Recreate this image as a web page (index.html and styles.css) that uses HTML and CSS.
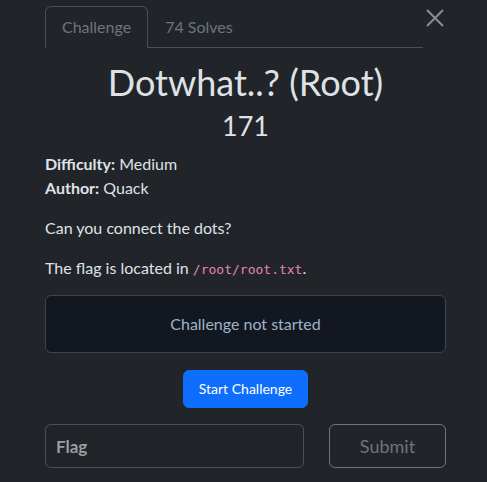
FILE: index.html
```html
<!DOCTYPE html>
<html>
<head>
<meta charset="utf-8">
<link rel="stylesheet" href="styles.css">
</head>
<body>
<div class="modal">
  <div class="header">
    <nav class="tabs">
      <span class="tab active">Challenge</span>
      <span class="tab">74 Solves</span>
    </nav>
    <button class="close" aria-label="Close">
      <svg width="18" height="18" viewBox="0 0 18 18"><path d="M1 1L17 17M17 1L1 17" stroke="#8a8e92" stroke-width="2" fill="none"/></svg>
    </button>
  </div>
  <h2 class="title">Dotwhat..? (Root)</h2>
  <h3 class="points">171</h3>
  <div class="meta">
    <div><b>Difficulty:</b> Medium</div>
    <div><b>Author:</b> Quack</div>
  </div>
  <p class="desc">Can you connect the dots?</p>
  <p class="desc">The flag is located in <code>/root/root.txt</code>.</p>
  <div class="status">Challenge not started</div>
  <div class="actions"><button class="start">Start Challenge</button></div>
  <div class="submit-row">
    <input class="flag" type="text" placeholder="Flag">
    <button class="submit">Submit</button>
  </div>
</div>
</body>
</html>
```
FILE: styles.css
```css
html, body {
  margin: 0;
  background: #212529;
  color: #dee2e6;
  font-family: Lato, "Open Sans", sans-serif;
  font-size: 16px;
  line-height: 24px;
}
.modal {
  width: 401px;
  padding: 6px 0 0 45px;
}
.header {
  display: flex;
  align-items: flex-start;
}
.tabs {
  display: flex;
  width: 378px;
  border-bottom: 1px solid #495057;
}
.tab {
  padding: 8px 16px;
  color: #6c757d;
  border: 1px solid transparent;
  border-radius: 6px 6px 0 0;
  margin-bottom: -1px;
}
.tab.active {
  border-color: #495057 #495057 #212529;
}
.close {
  background: none;
  border: 0;
  padding: 0;
  margin: 3px 0 0 3px;
  width: 18px;
  height: 18px;
  cursor: pointer;
}
.close svg { display: block; }
.title {
  margin: 12px 0 0;
  text-align: center;
  font-size: 36px;
  line-height: 44px;
  font-weight: 400;
}
.points {
  margin: 6px 0 0;
  text-align: center;
  font-size: 27px;
  line-height: 32px;
  font-weight: 400;
}
.meta {
  margin-top: 10px;
}
.meta b { font-weight: 700; }
.desc {
  margin: 16px 0 0;
}
code {
  font-family: "DejaVu Sans Mono", monospace;
  font-size: 13px;
  color: #e685b5;
}
.status {
  margin-top: 13px;
  height: 56px;
  border: 1px solid #3a4452;
  border-radius: 6px;
  background: #131820;
  color: #9db3c8;
  display: flex;
  align-items: center;
  justify-content: center;
}
.actions {
  display: flex;
  justify-content: center;
  margin-top: 17px;
}
.start {
  background: #0d6efd;
  color: #fff;
  border: 1px solid #0d6efd;
  border-radius: 6px;
  font-family: Lato, sans-serif;
  font-size: 14px;
  line-height: 24px;
  padding: 6px 15px;
}
.submit-row {
  display: flex;
  gap: 25px;
  margin-top: 16px;
}
.flag {
  width: 259px;
  height: 44px;
  box-sizing: border-box;
  background: #212529;
  border: 1px solid #495057;
  border-radius: 6px;
  padding: 0 10px;
  font-family: Lato, sans-serif;
  font-size: 17px;
  color: #dee2e6;
}
.flag::placeholder { color: #9a9ea3; font-weight: 700; }
.submit {
  width: 117px;
  height: 44px;
  background: transparent;
  border: 1px solid #6c757d;
  border-radius: 6px;
  color: #6c757d;
  font-family: Lato, sans-serif;
  font-size: 18px;
}
```
